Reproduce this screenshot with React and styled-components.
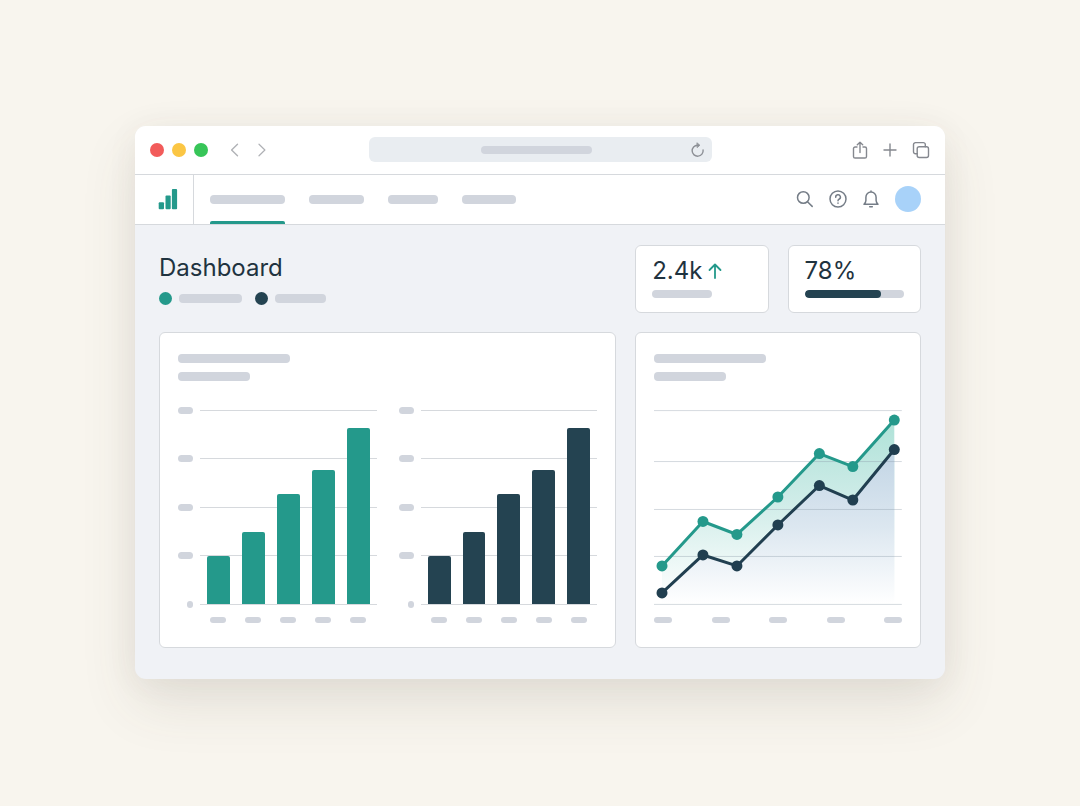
import React from 'react';
import styled, { createGlobalStyle } from 'styled-components';

const GlobalStyle = createGlobalStyle`
  * {
    box-sizing: border-box;
  }

  body {
    margin: 0;
    background: #f8f5ee;
    color: #1f3340;
    font-family: Inter, 'Liberation Sans', sans-serif;
  }

  button {
    display: flex;
    padding: 0;
    border: 0;
    background: none;
    color: inherit;
    cursor: pointer;
  }

  svg {
    display: block;
  }
`;

const TEAL = '#24998b';
const NAVY = '#244351';
const LINE = '#d6d9dd';
const MUTED = '#d1d5dd';

const Page = styled.div`
  display: grid;
  place-items: center;
  min-height: 100vh;
  padding-bottom: 2px;
`;

const Window = styled.div`
  width: 75%;
  border-radius: 11px;
  overflow: hidden;
  background: #f0f2f6;
  box-shadow: 0 24px 56px rgba(80, 74, 60, 0.12), 0 4px 32px rgba(80, 74, 60, 0.06);
`;

const Pill = styled.span`
  display: block;
  width: ${props => props.$width}px;
  height: ${props => props.$height || 9}px;
  border-radius: 4px;
  background: ${MUTED};
`;

const Circle = styled.span`
  flex: none;
  width: ${props => props.$size}px;
  height: ${props => props.$size}px;
  border-radius: 50%;
  background: ${props => props.$color};
`;

/* Browser bar */

const TitleBar = styled.div`
  display: grid;
  grid-template-columns: 1fr 343px 1fr;
  align-items: center;
  height: 49px;
  padding: 0 15px;
  border-bottom: 1px solid ${LINE};
  background: #fff;
`;

const Lights = styled.div`
  display: flex;
  align-items: center;
  gap: 8px;
`;

const History = styled.div`
  display: flex;
  gap: 15px;
  margin-left: 13px;
  color: #b0b2b6;
`;

const AddressBar = styled.div`
  display: flex;
  align-items: center;
  height: 25px;
  padding: 0 7px 0 14px;
  border-radius: 6px;
  background: #e9edf1;
  color: #8d9096;
`;

const Address = styled.div`
  display: flex;
  flex: 1;
  justify-content: center;
`;

const WindowActions = styled.div`
  display: flex;
  align-items: center;
  justify-content: flex-end;
  gap: 14px;
  color: #85888f;
`;

/* App navigation */

const NavBar = styled.header`
  display: flex;
  height: 50px;
  border-bottom: 1px solid ${LINE};
  background: #fff;
`;

const Logo = styled.a`
  display: flex;
  align-items: center;
  width: 59px;
  padding-left: 23px;
  border-right: 1px solid ${LINE};
`;

const Tabs = styled.nav`
  display: flex;
  flex: 1;
  gap: 24px;
  padding-left: 16px;
`;

const Tab = styled.a`
  display: grid;
  grid-template-rows: 1fr 3px;
  align-items: center;
  padding-top: 3px;

  &::after {
    content: '';
    height: 3px;
    border-radius: 2px 2px 0 0;
    background: ${props => (props.$active ? TEAL : 'transparent')};
  }
`;

const Tools = styled.div`
  display: flex;
  align-items: center;
  gap: 15px;
  padding-right: 24px;
  color: #757d87;
`;

/* Content */

const Content = styled.main`
  display: grid;
  grid-template-columns: 8fr 5fr;
  gap: 19px;
  padding: 20px 24px 31px;
`;

const Title = styled.h1`
  margin: 8px 0 9px;
  font-size: 24px;
  font-weight: 400;
  line-height: 30px;
`;

const Legend = styled.div`
  display: flex;
  align-items: center;
  gap: 7px;
`;

const LegendItem = styled.div`
  display: flex;
  align-items: center;
  gap: 7px;
  margin-right: 6px;
`;

const Stats = styled.div`
  display: grid;
  grid-template-columns: 1fr 1fr;
  gap: 19px;
`;

const Card = styled.section`
  border: 1px solid ${LINE};
  border-radius: 6px;
  background: #fff;
`;

const StatCard = styled(Card)`
  height: 68px;
  padding: 10px 16px;
`;

const StatValue = styled.div`
  display: flex;
  align-items: center;
  gap: 6px;
  margin-bottom: 4px;
  font-size: 24px;
  line-height: 30px;
`;

const Progress = styled.div`
  height: 8px;
  border-radius: 4px;
  overflow: hidden;
  background: ${MUTED};
`;

const ProgressFill = styled.div`
  height: 100%;
  border-radius: 4px;
  background: ${NAVY};
`;

const ChartCard = styled(Card)`
  padding: 21px 18px 24px;
`;

const ChartHeading = styled.div`
  display: grid;
  gap: 9px;
  margin-bottom: 29px;
`;

const ChartPair = styled.div`
  display: grid;
  grid-template-columns: 1fr 1fr;
  gap: 22px;
`;

const ChartGrid = styled.div`
  display: grid;
  grid-template-columns: 15px 1fr;
  column-gap: 7px;
  row-gap: 12px;
`;

const YAxis = styled.div`
  display: flex;
  flex-direction: column;
  align-items: flex-end;
  justify-content: space-between;
  margin: -3px 0;
`;

const Plot = styled.div`
  display: grid;
  grid-template-areas: 'plot';
  height: 195px;
`;

const Gridlines = styled.div`
  display: flex;
  grid-area: plot;
  flex-direction: column;
  justify-content: space-between;
`;

const Gridline = styled.span`
  height: 1px;
  background: ${LINE};
`;

const Bars = styled.div`
  display: flex;
  grid-area: plot;
  align-items: flex-end;
  gap: 12px;
  padding: 0 7px 1px;
`;

const Bar = styled.div`
  flex: 1;
  border-radius: 2px 2px 0 0;
  background: ${props => props.$color};
`;

const BarLabels = styled.div`
  display: flex;
  grid-column: 2;
  gap: 12px;
  padding: 0 7px;
`;

const BarLabel = styled.div`
  display: flex;
  flex: 1;
  justify-content: center;
`;

const LineLabels = styled.div`
  display: flex;
  justify-content: space-between;
  margin-top: 12px;
`;

const LinePlot = styled.svg`
  width: 100%;
  height: 195px;
  overflow: visible;
`;

const Icon = ({ width, height, stroke = 1.4, children }) => (
  <svg
    width={width}
    height={height}
    viewBox={`0 0 ${width} ${height}`}
    fill="none"
    stroke="currentColor"
    strokeWidth={stroke}
    strokeLinecap="round"
    strokeLinejoin="round"
    aria-hidden="true"
  >
    {children}
  </svg>
);

const barValues = [48, 72, 110, 134, 176];

const BarChart = ({ color }) => (
  <ChartGrid>
    <YAxis>
      {[15, 15, 15, 15, 6].map((width, i) => (
        <Pill key={i} $width={width} $height={7} />
      ))}
    </YAxis>
    <Plot>
      <Gridlines>
        {[0, 1, 2, 3, 4].map(i => <Gridline key={i} />)}
      </Gridlines>
      <Bars>
        {barValues.map(value => (
          <Bar key={value} $color={color} style={{ height: `${value}px` }} />
        ))}
      </Bars>
    </Plot>
    <BarLabels>
      {barValues.map(value => (
        <BarLabel key={value}>
          <Pill $width={16} $height={6} />
        </BarLabel>
      ))}
    </BarLabels>
  </ChartGrid>
);

const tealPoints = [[8, 156], [49, 111.5], [83, 124.5], [124, 87], [165.5, 43.5], [199, 56.5], [240.5, 10]];
const navyPoints = [[8, 183], [49, 145], [83, 156], [124, 115], [165.5, 75.5], [199, 90], [240.5, 39.5]];

const toPath = points => `M${points.map(p => p.join(' ')).join('L')}`;

const Series = ({ points, color }) => (
  <g>
    <path d={toPath(points)} fill="none" stroke={color} strokeWidth="3" strokeLinejoin="round" />
    {points.map(([x, y]) => (
      <circle key={x} cx={x} cy={y} r="5.5" fill={color} />
    ))}
  </g>
);

const LineChart = () => (
  <LinePlot viewBox="0 0 248 195" role="img">
    <defs>
      <linearGradient id="tealFill" gradientUnits="userSpaceOnUse" x1="0" y1="10" x2="0" y2="190">
        <stop offset="0" stopColor="#afe2d8" />
        <stop offset="0.45" stopColor="#cfece8" />
        <stop offset="1" stopColor="#ffffff" />
      </linearGradient>
      <linearGradient id="navyFill" gradientUnits="userSpaceOnUse" x1="0" y1="40" x2="0" y2="194">
        <stop offset="0" stopColor="#c2d5e5" />
        <stop offset="0.5" stopColor="#dce7f0" />
        <stop offset="1" stopColor="#ffffff" />
      </linearGradient>
    </defs>
    <path d={`${toPath(tealPoints)}V194H8Z`} fill="url(#tealFill)" />
    <path d={`${toPath(navyPoints)}V194H8Z`} fill="url(#navyFill)" />
    {[0.5, 51.5, 99.5, 146.5, 194.5].map(y => (
      <path key={y} d={`M0 ${y}H248`} stroke="#8a98a5" strokeOpacity="0.36" />
    ))}
    <Series points={tealPoints} color={TEAL} />
    <Series points={navyPoints} color="#213f50" />
  </LinePlot>
);

const App = () => (
  <>
    <GlobalStyle />
    <Page>
      <Window>
        <TitleBar>
          <Lights>
            <Circle $size={14} $color="#f25b5a" />
            <Circle $size={14} $color="#fbc644" />
            <Circle $size={14} $color="#37c558" />
            <History>
              <button type="button" aria-label="Back">
                <Icon width={12} height={14}><path d="M8.5 1.2L2.6 7l5.900 5.800" /></Icon>
              </button>
              <button type="button" aria-label="Forward">
                <Icon width={12} height={14} stroke={1.2}><path d="M3 1.2L8.900 7 3 12.800" /></Icon>
              </button>
            </History>
          </Lights>
          <AddressBar>
            <Address>
              <Pill $width={111} $height={8} />
            </Address>
            <button type="button" aria-label="Reload">
              <Icon width={15} height={16}>
                <path d="M7.5 3.200A5.500 5.500 0 1 0 13.100 8" />
                <path d="M7.200 1L9.900 3.200 7.400 5.400z" fill="currentColor" strokeWidth="0.8" />
              </Icon>
            </button>
          </AddressBar>
          <WindowActions>
            <button type="button" aria-label="Share">
              <Icon width={16} height={18}>
                <path d="M5 6H3.100A1.600 1.600 0 0 0 1.500 7.600V15.400A1.600 1.600 0 0 0 3.100 17H12.900A1.600 1.600 0 0 0 14.500 15.400V7.600A1.600 1.600 0 0 0 12.900 6H11M8 11.500V1.300M5.300 3.800L8 1.200 10.700 3.800" />
              </Icon>
            </button>
            <button type="button" aria-label="New tab">
              <Icon width={16} height={16}><path d="M8 2v12M2 8h12" /></Icon>
            </button>
            <button type="button" aria-label="Show tabs">
              <Icon width={18} height={18}>
                <rect x="5.200" y="5.700" width="11.300" height="10.800" rx="2" />
                <path d="M5.200 12.800H3.500A2 2 0 0 1 1.500 10.800V3.600A2 2 0 0 1 3.500 1.600H11.300A2 2 0 0 1 13.300 3.600V5.700" />
              </Icon>
            </button>
          </WindowActions>
        </TitleBar>

        <NavBar>
          <Logo href="#" aria-label="Home">
            <svg width="20" height="22" viewBox="0 0 20 22" fill={TEAL} aria-hidden="true">
              <rect x="0.700" y="14.300" width="5.300" height="7" rx="1" />
              <rect x="7.500" y="7.500" width="5.200" height="13.800" rx="1" />
              <rect x="13.900" y="1" width="5.200" height="20.300" rx="1" />
            </svg>
          </Logo>
          <Tabs>
            <Tab href="#" $active aria-label="Overview"><Pill $width={75} /></Tab>
            <Tab href="#" aria-label="Reports"><Pill $width={55} /></Tab>
            <Tab href="#" aria-label="Goals"><Pill $width={50} /></Tab>
            <Tab href="#" aria-label="Settings"><Pill $width={54} /></Tab>
          </Tabs>
          <Tools>
            <button type="button" aria-label="Search">
              <Icon width={18} height={18} stroke={1.5}>
                <circle cx="7.300" cy="7.500" r="5.800" />
                <path d="M11.500 11.700L16.200 16.400" />
              </Icon>
            </button>
            <button type="button" aria-label="Help">
              <Icon width={18} height={18} stroke={1.500}>
                <circle cx="9" cy="9" r="8" />
                <path d="M6.700 7.200A2.350 2.350 0 1 1 10 9.200C9.300 9.600 9 9.900 9 10.700M9 13.100v0.100" />
              </Icon>
            </button>
            <button type="button" aria-label="Notifications">
              <Icon width={18} height={18} stroke={1.500}>
                <path d="M2 14.200H16C14.700 13 14.100 12 14.100 10.500V7.200A5.100 5.100 0 0 0 3.900 7.200V10.500C3.900 12 3.300 13 2 14.200zM7.700 16.800h2.600M9 1v1" />
              </Icon>
            </button>
            <Circle $size={26} $color="#a8d2f9" />
          </Tools>
        </NavBar>

        <Content>
          <div>
            <Title>Dashboard</Title>
            <Legend>
              <LegendItem>
                <Circle $size={13} $color={TEAL} />
                <Pill $width={63} />
              </LegendItem>
              <LegendItem>
                <Circle $size={13} $color={NAVY} />
                <Pill $width={51} />
              </LegendItem>
            </Legend>
          </div>
          <Stats>
            <StatCard>
              <StatValue>
                2.4k
                <Icon width={14} height={16} stroke={1.800}>
                  <path stroke={TEAL} d="M7 15V1.500M1.500 7L7 1.500 12.500 7" />
                </Icon>
              </StatValue>
              <Pill $width={60} $height={8} />
            </StatCard>
            <StatCard>
              <StatValue>78%</StatValue>
              <Progress>
                <ProgressFill style={{ width: '77%' }} />
              </Progress>
            </StatCard>
          </Stats>

          <ChartCard>
            <ChartHeading>
              <Pill $width={112} />
              <Pill $width={72} />
            </ChartHeading>
            <ChartPair>
              <BarChart color={TEAL} />
              <BarChart color={NAVY} />
            </ChartPair>
          </ChartCard>
          <ChartCard>
            <ChartHeading>
              <Pill $width={112} />
              <Pill $width={72} />
            </ChartHeading>
            <LineChart />
            <LineLabels>
              {[0, 1, 2, 3, 4].map(i => <Pill key={i} $width={18} $height={6} />)}
            </LineLabels>
          </ChartCard>
        </Content>
      </Window>
    </Page>
  </>
);

export default App;
